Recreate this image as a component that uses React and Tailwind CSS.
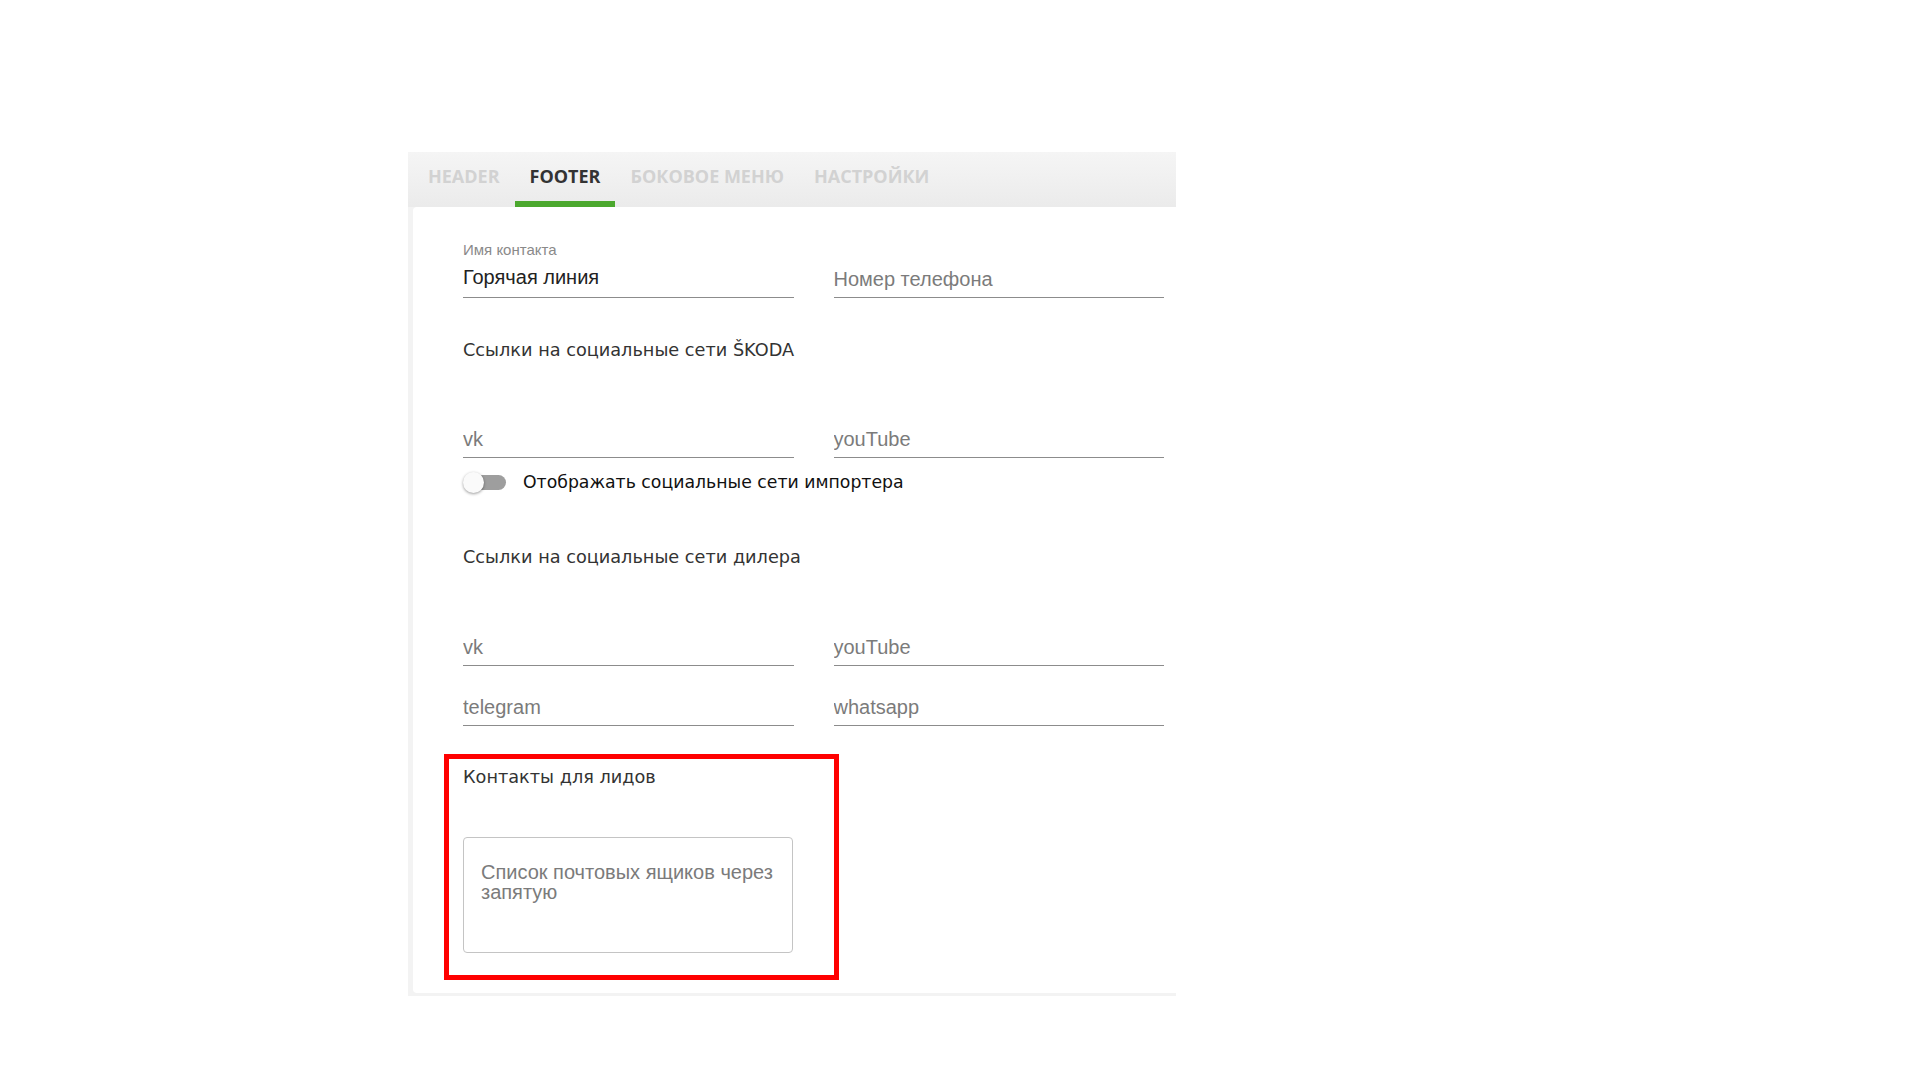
import React from "react";

const TF = { fontFamily: '"Open Sans", "Noto Sans", sans-serif' };
const HF = { fontFamily: '"DejaVu Sans", "Noto Sans", sans-serif' };
const AF = { fontFamily: '"Liberation Sans", Arial, sans-serif' };

function Field({ label, value, placeholder }) {
  return (
    <div className="flex flex-col border-b border-[#8c8c8c]" style={AF}>
      {label !== undefined && (
        <div className="h-[18px] mb-[6px] text-[15px] leading-[18px] text-[#8a8a8a]">{label}</div>
      )}
      <input
        readOnly
        value={value || ""}
        placeholder={placeholder}
        className={
          "h-[24px] text-[20px] leading-[24px] text-[#222] placeholder:text-[#7b7b7b] outline-none bg-transparent w-full " +
          (value ? "mb-[8px]" : "mb-[6px]")
        }
        style={AF}
      />
    </div>
  );
}

function Tab({ children, active }) {
  return (
    <div
      className={
        "h-full px-[15px] flex items-center border-b-[6px] text-[18px] font-bold " +
        (active ? "border-[#4ba82e] text-[#333]" : "border-transparent text-[#d2d2d2]")
      }
      style={TF}
    >
      {children}
    </div>
  );
}

function Heading({ className, children }) {
  return (
    <div className={"h-[24px] text-[17.7px] leading-[24px] text-[#333] " + className} style={HF}>
      {children}
    </div>
  );
}

export default function App() {
  return (
    <div className="min-h-screen bg-white">
      <div className="pt-[152px] pl-[408px]">
        <div className="w-[768px] bg-[#f3f3f3]">
          <div className="h-[55px] pl-[5px] flex bg-gradient-to-b from-[#f5f5f5] to-[#ebebeb]">
            <Tab>HEADER</Tab>
            <Tab active>FOOTER</Tab>
            <Tab>БОКОВОЕ МЕНЮ</Tab>
            <Tab>НАСТРОЙКИ</Tab>
          </div>
          <div className="pl-[5px] pb-[3px]">
            <div className="relative bg-white rounded-l-[4px] pl-[50px] pr-[12px] pt-[34px] pb-[40px] flex flex-col">
              <div className="grid grid-cols-2 gap-x-[40px]">
                <Field label="Имя контакта" value="Горячая линия" />
                <div className="flex flex-col justify-end">
                  <Field placeholder="Номер телефона" />
                </div>
              </div>
              <Heading className="mt-[40px]">Ссылки на социальные сети ŠKODA</Heading>
              <div className="mt-[65px] grid grid-cols-2 gap-x-[40px]">
                <Field placeholder="vk" />
                <Field placeholder="youTube" />
              </div>
              <div className="mt-[12px] h-[24px] flex items-center">
                <div className="relative w-[43px] h-[24px]">
                  <div className="absolute left-[5px] top-[5px] w-[38px] h-[15px] rounded-full bg-[#9e9e9e]" />
                  <div className="absolute left-0 top-[2px] w-[21px] h-[21px] rounded-full bg-[#fafafa] shadow-[0_1px_3px_rgba(0,0,0,0.4)]" />
                </div>
                <div className="ml-[17px] text-[17.3px] leading-[24px] text-[#111]" style={HF}>
                  Отображать социальные сети импортера
                </div>
              </div>
              <Heading className="mt-[51px]">Ссылки на социальные сети дилера</Heading>
              <div className="mt-[66px] grid grid-cols-2 gap-x-[40px]">
                <Field placeholder="vk" />
                <Field placeholder="youTube" />
              </div>
              <div className="mt-[29px] grid grid-cols-2 gap-x-[40px]">
                <Field placeholder="telegram" />
                <Field placeholder="whatsapp" />
              </div>
              <Heading className="mt-[39px]">Контакты для лидов</Heading>
              <div className="mt-[48px] w-[330px]">
                <textarea
                  readOnly
                  placeholder="Список почтовых ящиков через запятую"
                  className="block w-full h-[116px] resize-none rounded-[4px] border border-[#c4c4c4] pl-[17px] pr-[8px] pt-[24px] text-[20px] leading-[20px] text-[#222] placeholder:text-[#7b7b7b] outline-none"
                  style={AF}
                />
              </div>
              <div className="absolute left-[31px] top-[547px] w-[395px] h-[226px] border-[5px] border-[#ff0000] pointer-events-none" />
            </div>
          </div>
        </div>
      </div>
    </div>
  );
}
